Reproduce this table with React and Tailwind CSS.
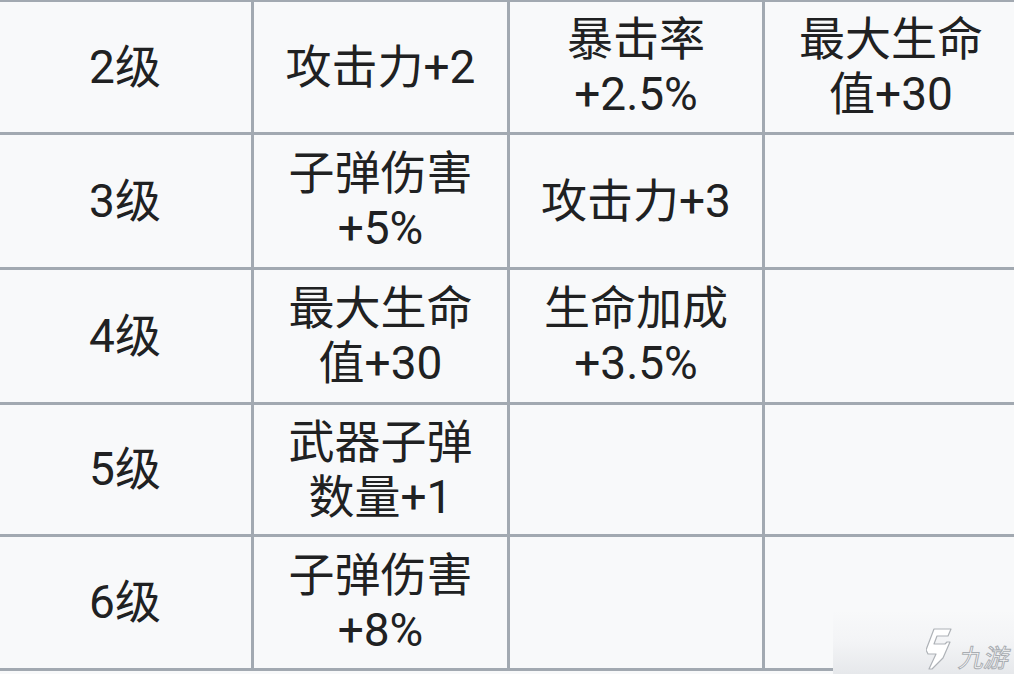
import React from "react";

const rows = [
  { h: "h-[130px]", cells: [["2级"], ["攻击力+2"], ["暴击率", "+2.5%"], ["最大生命", "值+30"]] },
  { h: "h-[132px]", cells: [["3级"], ["子弹伤害", "+5%"], ["攻击力+3"], []] },
  { h: "h-[132px]", cells: [["4级"], ["最大生命", "值+30"], ["生命加成", "+3.5%"], []] },
  { h: "h-[129px]", cells: [["5级"], ["武器子弹", "数量+1"], [], []] },
  { h: "h-[131px]", cells: [["6级"], ["子弹伤害", "+8%"], [], []] },
];

function Watermark() {
  return (
    <div className="absolute right-0 bottom-0 w-[181px] h-[64px] bg-gradient-to-b from-[#f8f9fa00] via-[#f3f4f6] to-[#e6e8eb] flex items-end justify-end pr-[4px] pb-[5px] gap-[8px]">
      <svg width="26" height="42" viewBox="0 0 26 42" className="mb-[-1px]">
        <path
          d="M8 1 L25 1 L22 8 L11 8 L8 16 L19 16 L21 14 L24 14 L17 30 L6 41 L3 41 L10 26 L2 26 L0 22 Z"
          fill="#ffffff"
          stroke="#aeb2b7"
          strokeWidth="1.2"
          strokeLinejoin="round"
        />
      </svg>
      <span className="font-['Noto_Sans_CJK_SC',sans-serif] text-[25px] leading-none text-white [-webkit-text-stroke:1px_#a9adb2] -skew-x-12">
        九游
      </span>
    </div>
  );
}

export default function App() {
  return (
    <div className="relative w-[1014px] h-[674px] overflow-hidden bg-[#f8f9fa]">
      <div className="ml-[-4px] mt-[-1px] w-max grid grid-cols-[252px_253px_252px_252px] gap-[3px] p-[3px] bg-[#a2a9b1] font-['Roboto','Noto_Sans_CJK_SC',sans-serif] text-[46px] leading-[55px] text-[#202122]">
        {rows.map((r, i) =>
          r.cells.map((lines, j) => (
            <div
              key={`${i}-${j}`}
              className={`${r.h} bg-[#f8f9fa] flex flex-col items-center justify-center text-center`}
            >
              {lines.map((t) => (
                <div key={t}>{t}</div>
              ))}
            </div>
          ))
        )}
      </div>
      <Watermark />
    </div>
  );
}
